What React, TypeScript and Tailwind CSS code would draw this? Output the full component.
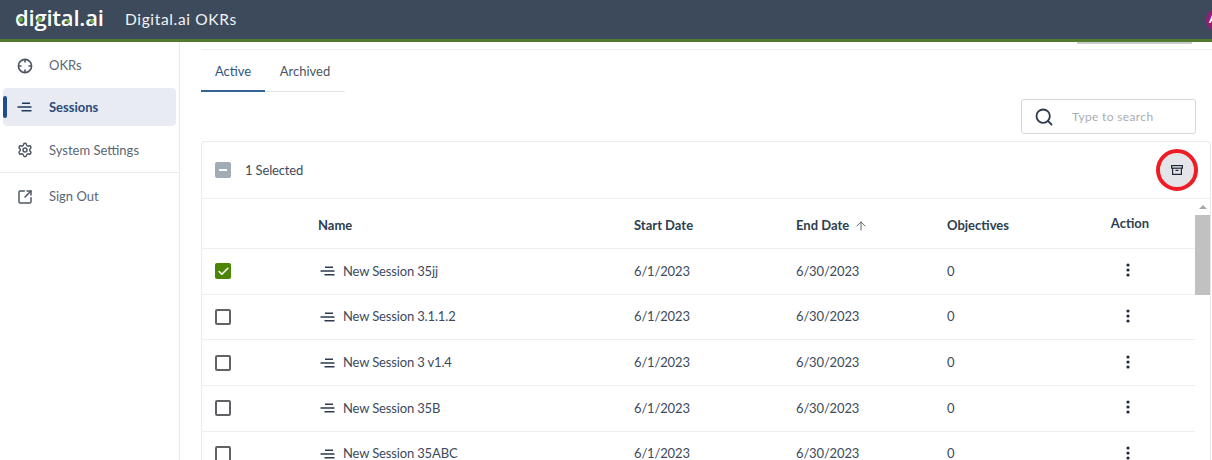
import { Settings, SquareArrowOutUpRight, Search, ArrowUp, Check } from "lucide-react";

const rows = ["New Session 35jj", "New Session 3.1.1.2", "New Session 3 v1.4", "New Session 35B", "New Session 35ABC"];

function SessionIcon({ className }: { className?: string }) {
  return (
    <svg viewBox="0 0 15 10" className={className} fill="none" stroke="currentColor" strokeWidth="1.5">
      <path d="M5 1.2H13M0.5 5H14.5M4.5 8.8H14.5" />
    </svg>
  );
}

function OkrIcon() {
  return (
    <svg viewBox="0 0 16 16" className="h-4 w-4 text-[#4b5563]" fill="none" stroke="currentColor" strokeWidth="1.6">
      <circle cx="8" cy="8" r="6.6" />
      <path d="M8 1.5V4.5M8 11.5V14.5M1.5 8H4.5M11.5 8H14.5" />
    </svg>
  );
}

function Kebab() {
  return (
    <svg viewBox="0 0 4 14" className="h-[14px] w-1 text-[#1f2937]" fill="currentColor">
      <circle cx="2" cy="2" r="1.6" />
      <circle cx="2" cy="7" r="1.6" />
      <circle cx="2" cy="12" r="1.6" />
    </svg>
  );
}

function Logo() {
  return (
    <div className="relative h-[30px] w-[90px] text-[22px] leading-[30px] font-semibold tracking-[-0.2px] text-white [font-family:'Open_Sans','Liberation_Sans',sans-serif]">
      <span className="relative -top-[3px]">digital.ai</span>
      <span className="absolute left-[3px] top-[12px] h-[5px] w-[5px] rounded-full bg-[#6aa842]" />
      <span className="absolute left-[22px] top-[12px] h-[5px] w-[5px] rounded-full bg-[#6aa842]" />
      <span className="absolute left-[51px] top-[14px] h-[4px] w-[4px] rounded-full bg-[#6aa842]" />
      <span className="absolute left-[75px] top-[14px] h-[4px] w-[4px] rounded-full bg-[#6aa842]" />
    </div>
  );
}

const cols = "grid-cols-[116px_316px_162px_151px_151px_64px]";

export default function App() {
  return (
    <div className="h-[460px] w-[1212px] overflow-hidden bg-white text-[13px] text-[#3d4a5c] [font-family:Lato,'Liberation_Sans',sans-serif]">
      <header className="flex h-[42px] items-center border-b-[3px] border-[#527a2e] bg-[#3d4a5c]">
        <div className="ml-[15px] w-[110px]">
          <Logo />
        </div>
        <span className="text-[15.5px] tracking-[0.65px] text-[#f3f4f6]">Digital.ai OKRs</span>
        <div className="ml-auto mr-[-24px] flex h-[24px] w-[30px] items-center rounded-full bg-[#8e1f74] pl-[3px] text-[11px] font-bold text-white">
          A
        </div>
      </header>
      <div className="flex h-[418px]">
        <aside className="w-[180px] shrink-0 border-r border-[#e8eaed] pt-[4px]">
          <div className="flex h-[40px] items-center gap-[16px] pl-[17px] text-[#5b6675]">
            <OkrIcon />
            <span>OKRs</span>
          </div>
          <div className="relative mx-[3px] mt-[2px] flex h-[38px] items-center gap-[17px] rounded bg-[#e8ecf2] pl-[14px] font-bold text-[#2a4a78]">
            <span className="absolute left-0 top-[8px] h-[22px] w-[4px] rounded-sm bg-[#1f4e8c]" />
            <SessionIcon className="h-[10px] w-[15px] text-[#1f3a5f]" />
            <span className="relative top-[1px]">Sessions</span>
          </div>
          <div className="mt-[5px] flex h-[38px] items-center gap-[16px] pl-[17px] text-[#5b6675]">
            <Settings className="h-4 w-4 text-[#4b5563]" strokeWidth={2.2} />
            <span className="relative top-[1px]">System Settings</span>
          </div>
          <div className="mt-[3px] flex h-[48px] items-center gap-[16px] border-t border-[#e8eaed] pl-[17px] text-[#5b6675]">
            <SquareArrowOutUpRight className="h-4 w-4 text-[#4b5563]" strokeWidth={2.2} />
            <span>Sign Out</span>
          </div>
        </aside>
        <main className="relative min-w-0 flex-1 pl-[21px]">
          <div className="absolute right-[20px] top-0 h-[2px] w-[115px] bg-[#c9cccf]" />
          <div className="mt-[7px] border-t border-[#eceef0]" />
          <div className="flex h-[42px] w-[144px] border-b border-[#e3e5e8]">
            <div className="flex h-[42px] w-[64px] items-center justify-center border-b-2 border-[#356298] pt-[3px] text-[#2f5480]">
              Active
            </div>
            <div className="flex h-[41px] w-[80px] items-center justify-center pt-[2px] text-[#4b5563]">Archived</div>
          </div>
          <div className="mt-[7px] flex justify-end pr-[16px]">
            <div className="flex h-[35px] w-[175px] items-center gap-[18px] rounded-[3px] border border-[#d5d7da] pl-[12px]">
              <Search className="h-[20px] w-[20px] text-[#2d3b4e]" strokeWidth={2.2} />
              <span className="text-[12px] tracking-[0.35px] text-[#a9adb3]">Type to search</span>
            </div>
          </div>
          <section className="mt-[7px] mr-[1px] rounded-t-[4px] border border-b-0 border-[#e8eaed]">
            <div className="flex h-[57px] items-center border-b border-[#eceef0] pl-[13px] pr-[16px]">
              <span className="flex h-4 w-4 items-center justify-center rounded-[2px] bg-[#a3abb6]">
                <span className="h-[2px] w-[8px] bg-white" />
              </span>
              <span className="relative top-[1px] ml-[14px] tracking-[-0.15px]">1 Selected</span>
              <div className="relative ml-auto flex h-[34px] w-[34px] items-center justify-center rounded-full bg-[#e4e5e8]">
                <svg viewBox="0 0 12 10" className="h-[10px] w-[12px] text-[#1f2937]" fill="none" stroke="currentColor" strokeWidth="1.2">
                  <rect x="0.6" y="0.6" width="10.8" height="2.6" />
                  <path d="M1.6 3.2V9.4H10.4V3.2M4.5 5.4H7.5" />
                </svg>
                <span className="absolute -inset-[4px] rounded-full border-[4px] border-[#ee1c25]" />
              </div>
            </div>
            <div className="relative">
              <div className={`grid h-[50px] ${cols} items-center border-b border-[#eceef0] pt-[4px] font-bold text-[#2c3e50]`}>
                <span />
                <span>Name</span>
                <span>Start Date</span>
                <span className="flex items-center gap-[5px]">
                  End Date <ArrowUp className="h-[14px] w-[14px] text-[#4b5563]" strokeWidth={1.5} />
                </span>
                <span>Objectives</span>
                <span className="-mt-[3px] text-center">Action</span>
              </div>
              {rows.map((name, i) => (
                <div key={name} className={`grid h-[45.7px] ${cols} items-center border-b border-[#eceef0] tracking-[-0.15px]`}>
                  <span className="pl-[13px]">
                    {i === 0 ? (
                      <span className="flex h-4 w-4 items-center justify-center rounded-[2px] bg-[#4a8505]">
                        <Check className="h-[13px] w-[13px] text-white" strokeWidth={3} />
                      </span>
                    ) : (
                      <span className="block h-4 w-4 rounded-[2px] border-2 border-[#5f6368]" />
                    )}
                  </span>
                  <span className="flex items-center gap-[8px] pl-[2px]">
                    <SessionIcon className="h-[10px] w-[15px] text-[#2d3b4e]" />
                    {name}
                  </span>
                  <span>6/1/2023</span>
                  <span>6/30/2023</span>
                  <span>0</span>
                  <span className="flex justify-center pr-[4px] pb-[2px]">
                    <Kebab />
                  </span>
                </div>
              ))}
              <div className="absolute right-0 top-0 flex h-full w-[15px] flex-col items-center bg-white">
                <span className="mt-[6px] h-0 w-0 border-x-[4px] border-b-[4px] border-x-transparent border-b-[#a8a8a8]" />
                <span className="mt-[6px] h-[80px] w-full bg-[#c1c1c1]" />
              </div>
            </div>
          </section>
        </main>
      </div>
    </div>
  );
}
